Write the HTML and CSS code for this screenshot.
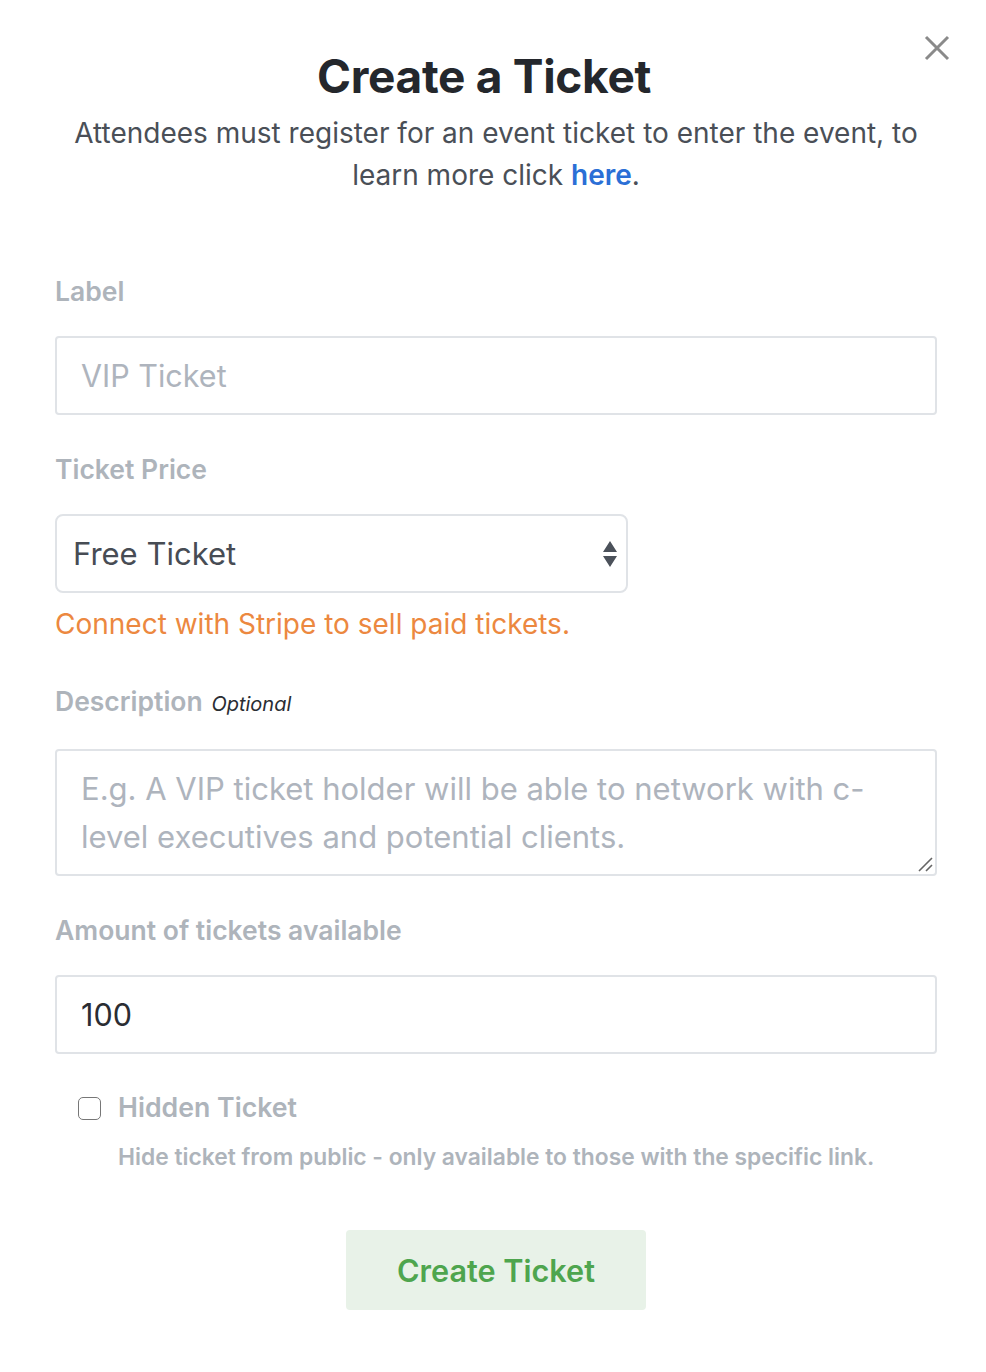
FILE: index.html
```html
<!DOCTYPE html>
<html>
<head>
<meta charset="utf-8">
<link rel="stylesheet" href="styles.css">
</head>
<body>
<div class="modal">
  <button class="close" aria-label="Close">
    <svg width="26" height="26" viewBox="0 0 26 26"><path d="M2 2 L24 24 M24 2 L2 24" stroke="#8a8a8a" stroke-width="3" stroke-linecap="butt"/></svg>
  </button>
  <header class="head">
    <h1 class="title">Create a Ticket</h1>
    <p class="intro">Attendees must register for an event ticket to enter the event, to learn more click <a class="link" href="#">here</a>.</p>
  </header>
  <form class="form">
    <div class="field">
      <label class="label">Label</label>
      <div class="input placeholder">VIP Ticket</div>
    </div>
    <div class="field">
      <label class="label">Ticket Price</label>
      <div class="select">
        <span class="select-value">Free Ticket</span>
        <svg class="arrows" width="14" height="28" viewBox="0 0 14 28"><path d="M7 1 L14 12 L0 12 Z M0 16 L14 16 L7 27 Z" fill="#4b515a"/></svg>
      </div>
      <p class="warn">Connect with Stripe to sell paid tickets.</p>
    </div>
    <div class="field">
      <label class="label">Description <em class="opt">Optional</em></label>
      <div class="textarea placeholder">E.g. A VIP ticket holder will be able to network with c-level executives and potential clients.
        <svg class="grip" width="16" height="16" viewBox="0 0 16 16"><path d="M15 2 L2 15 M15 9 L9 15" stroke="#666" stroke-width="1.6"/></svg>
      </div>
    </div>
    <div class="field">
      <label class="label">Amount of tickets available</label>
      <div class="input value">100</div>
    </div>
    <div class="check-row">
      <span class="checkbox"></span>
      <div class="check-text">
        <span class="check-label">Hidden Ticket</span>
        <span class="check-help">Hide ticket from public - only available to those with the specific link.</span>
      </div>
    </div>
    <div class="actions">
      <button type="button" class="btn">Create Ticket</button>
    </div>
  </form>
</div>
</body>
</html>
```
FILE: styles.css
```css
* { box-sizing: border-box; }
html, body { margin: 0; padding: 0; background: #fff; }
body { font-family: "Inter", "Liberation Sans", sans-serif; color: #262a30; }
.modal { position: relative; width: 986px; min-height: 1372px; padding: 48px 49px 0 55px; }
.close { position: absolute; top: 35px; right: 36px; background: none; border: 0; padding: 0; cursor: pointer; }
.close svg { display: block; }
.head { text-align: center; }
.title { margin: 0; padding-right: 24px; font-size: 46px; font-weight: 700; line-height: 56px; color: #24272c; letter-spacing: -0.3px; }
.intro { margin: 8px auto 0; width: 870px; font-size: 28px; line-height: 42px; color: #4a4f57; }
.link { color: #2b6fd6; font-weight: 600; text-decoration: none; }
.form { margin-top: 79px; display: flex; flex-direction: column; }
.field { display: flex; flex-direction: column; margin-bottom: 38px; }
.label { font-size: 26.5px; font-weight: 600; color: #aeb4bb; line-height: 32px; margin-bottom: 29px; }
.opt { font-size: 20px; font-weight: 400; color: #2a2d33; margin-left: 2px; }
.input { height: 79px; border: 2px solid #e0e3e7; border-radius: 4px; padding: 0 24px; display: flex; align-items: center; font-size: 30.5px; }
.placeholder { color: #aeb4bd; }
.value { color: #2a2d33; }
.select { width: 573px; height: 79px; border: 2px solid #e0e3e7; border-radius: 8px; padding: 0 9px 0 16px; display: flex; align-items: center; justify-content: space-between; font-size: 31px; color: #474c54; }
.warn { margin: 13px 0 5px; font-size: 28px; color: #ec8840; line-height: 36px; }
.textarea { position: relative; height: 127px; border: 2px solid #e0e3e7; border-radius: 4px; padding: 14px 24px; font-size: 31px; line-height: 48px; }
.grip { position: absolute; right: 2px; bottom: 2px; }
.check-row { display: flex; gap: 17px; padding-left: 23px; margin-top: -5px; }
.checkbox { width: 23px; height: 23px; border: 1.5px solid #777; border-radius: 5px; margin-top: 10px; flex: none; }
.check-text { display: flex; flex-direction: column; }
.check-label { font-size: 26.7px; font-weight: 600; color: #aeb4bb; line-height: 40px; }
.check-help { margin-top: 14px; font-size: 22.8px; font-weight: 600; color: #aeb4bb; line-height: 32px; }
.actions { display: flex; justify-content: center; margin-top: 57px; }
.btn { width: 300px; height: 80px; border: 0; border-radius: 4px; background: #e8f2e8; color: #4ea54e; font-family: inherit; font-size: 30.6px; font-weight: 600; }
```
